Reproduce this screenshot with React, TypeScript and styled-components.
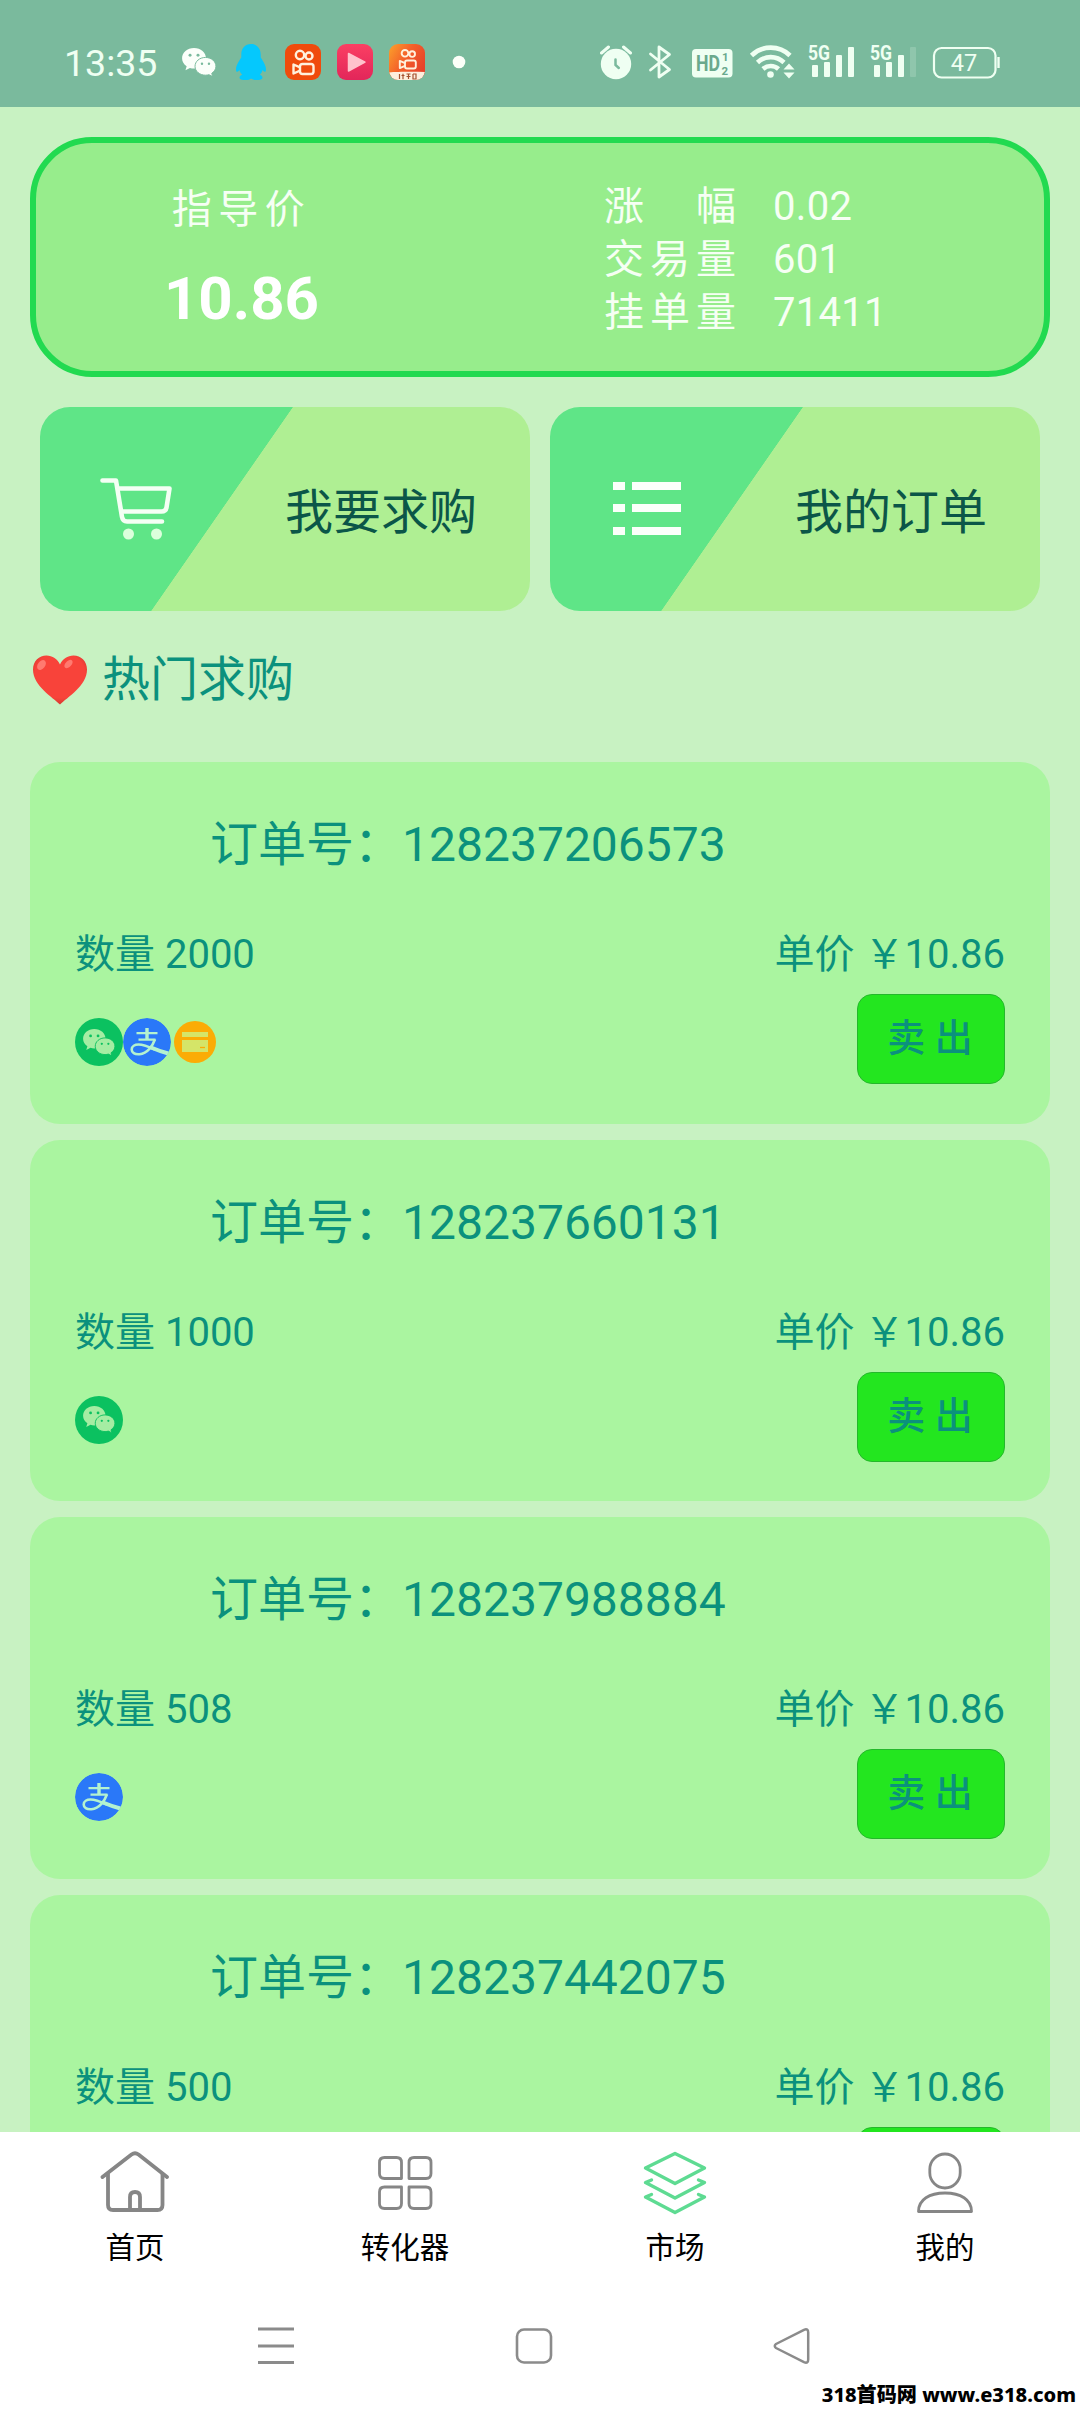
import React from "react";
import styled, { createGlobalStyle } from "styled-components";
import { AiFillAlipayCircle } from "react-icons/ai";

const GlobalStyle = createGlobalStyle`
  *, *::before, *::after { box-sizing: border-box; }
  body {
    margin: 0;
    background: #ffffff;
    font-family: Roboto, "Noto Sans CJK SC", sans-serif;
    -webkit-font-smoothing: antialiased;
  }
  svg { display: block; flex: none; }
`;

const Screen = styled.div`
  position: relative;
  display: flex;
  flex-direction: column;
  width: 1080px;
  height: 2412px;
  overflow: hidden;
  background: #ffffff;
`;

/* ---------- status bar ---------- */

const StatusBar = styled.header`
  display: flex;
  flex: none;
  align-items: center;
  justify-content: space-between;
  height: 107px;
  padding: 17px 79px 0 64px;
  background: #7aba9d;
  color: #effff2;
`;

const StatusLeft = styled.div`
  display: flex;
  align-items: center;
`;

const Clock = styled.time`
  width: 109px;
  padding-top: 2px;
  font-size: 37.5px;
  line-height: 44px;
  white-space: nowrap;
`;

const AppSlot = styled.span`
  display: flex;
  justify-content: center;
  width: 52px;
`;

const StatusRight = styled.div`
  display: flex;
  align-items: center;
  gap: 12px;
`;

/* ---------- content ---------- */

const Main = styled.main`
  flex: 1;
  min-height: 0;
  padding: 30px 30px 0;
  overflow: hidden;
  background: #c8f2c2;
`;

const PriceCard = styled.section`
  display: flex;
  height: 240px;
  border: 6px solid #22da50;
  border-radius: 62px;
  background: #97ed8c;
  color: #f6fff4;
  font-size: 40px;
`;

const GuidePrice = styled.div`
  display: flex;
  flex-direction: column;
  align-items: center;
  width: 411px;
  padding-top: 40px;
`;

const GuideLabel = styled.span`
  line-height: 53px;
  letter-spacing: 6.5px;
`;

const GuideValue = styled.strong`
  margin-top: 28px;
  color: #ffffff;
  font-size: 60px;
  font-weight: 700;
  line-height: 70px;
`;

const Stats = styled.dl`
  display: grid;
  grid-template-columns: 169px auto;
  grid-auto-rows: 53px;
  align-content: start;
  margin: 0;
  padding: 37px 0 0 157px;
  line-height: 53px;
`;

const StatName = styled.dt`
  letter-spacing: 6px;
  white-space: pre;
`;

const StatValue = styled.dd`
  margin: 0;
  letter-spacing: 0.3px;
`;

const Actions = styled.nav`
  display: grid;
  grid-template-columns: 1fr 1fr;
  gap: 20px;
  margin-top: 30px;
  padding: 0 10px;
`;

const ActionButton = styled.button`
  display: flex;
  align-items: center;
  justify-content: space-between;
  height: 204px;
  padding: 0 53px 3px 59px;
  border: 0;
  border-radius: 30px;
  background: linear-gradient(124.8deg, #5fe587 39.98%, #afef93 40.1%);
  color: #0b5648;
  font: inherit;
  font-size: 48px;
`;

const Heading = styled.h2`
  display: flex;
  align-items: center;
  gap: 15px;
  margin: 37px 0 50px 3px;
  color: #0b917d;
  font-size: 48px;
  font-weight: 400;
  line-height: 64px;
`;

const OrderList = styled.div`
  display: flex;
  flex-direction: column;
  gap: 16px;
`;

const OrderCard = styled.article`
  flex: none;
  height: 361.6px;
  padding: 51px 45px 0;
  border-radius: 30px;
  background: #aaf5a0;
  color: #0b917d;
`;

const OrderTitle = styled.h3`
  margin: 0 0 50px 135px;
  font-size: 48px;
  font-weight: 400;
  line-height: 64px;
  white-space: nowrap;
`;

const OrderRow = styled.div`
  display: flex;
  align-items: center;
  justify-content: space-between;
  font-size: 40px;
  line-height: 56px;
`;

const OrderActions = styled(OrderRow)`
  margin-top: 11px;
`;

const Payments = styled.div`
  display: flex;
  align-items: center;
  padding-top: 6px;
`;

const SellButton = styled.button`
  width: 148px;
  height: 90px;
  padding: 0 2px 2px 0;
  border: 1.5px solid #24b82b;
  border-radius: 15px;
  background: #23e61f;
  color: #0b917d;
  font: inherit;
  font-size: 38px;
  font-weight: 500;
`;

/* ---------- bottom ---------- */

const TabBar = styled.nav`
  display: grid;
  flex: none;
  grid-template-columns: repeat(4, 1fr);
  height: 150px;
  padding-top: 17px;
  background: #ffffff;
`;

const Tab = styled.a<{ $active?: boolean }>`
  display: flex;
  flex-direction: column;
  align-items: center;
  gap: 16px;
  color: #000000;
  font-size: 29.500px;
  line-height: 34px;

  svg { color: ${(p) => (p.$active ? "#5edb92" : "#868686")}; }
`;

const SystemNav = styled.footer`
  display: grid;
  flex: none;
  grid-template-columns: repeat(3, 258px);
  justify-items: center;
  height: 130px;
  padding: 43px 0 0 147px;
  background: #ffffff;
  color: #8b8b8b;
`;

const Watermark = styled.span`
  position: absolute;
  right: 4px;
  bottom: 3px;
  color: #000000;
  font-family: "Noto Sans", "Noto Sans CJK SC", sans-serif;
  font-size: 20.1px;
  font-weight: 800;
  line-height: 28px;
  white-space: nowrap;
`;

/* ---------- icons ---------- */

const ChatBubbles = ({ size, fill, eyes }: { size: number; fill: string; eyes: string }) => (
  <svg width={size} height={size * 0.82} viewBox="0 0 34 28">
    <path
      d="M12 0C5.200 0 0 4.700 0 10.300c0 3.400 1.800 6.200 4.600 8.100L3.400 22.400l4.500-2.300c1.300.400 2.700.600 4.100.600C18.800 20.700 24 16 24 10.300S18.800 0 12 0z"
      fill={fill}
    />
    <circle cx="8" cy="7.400" r="1.500" fill={eyes} />
    <circle cx="16" cy="7.400" r="1.500" fill={eyes} />
    <path
      d="M23.500 9.500c-6 0-10.500 4-10.500 8.900s4.500 8.900 10.500 8.900c1.200 0 2.400-.2 3.500-.5l3.700 1.900-.9-3.300c2.600-1.700 4.200-4.200 4.200-7 0-4.900-4.500-8.900-10.500-8.900z"
      fill={fill}
      stroke={eyes}
      strokeWidth="1"
    />
    <circle cx="20" cy="15.800" r="1.200" fill={eyes} />
    <circle cx="27" cy="15.800" r="1.200" fill={eyes} />
  </svg>
);

const PenguinIcon = () => (
  <svg width="30" height="36" viewBox="0 0 30 36">
    <path
      d="M15 0C9 0 5.300 4.500 5.300 10.500v3C3 17 0 21 0 25.500c0 3 1.500 3 3.500.5.500 2 1.400 3.500 2.700 4.800-1.700.7-2.700 1.700-2.700 2.900C3.500 35.200 6 36 9.500 36c2.400 0 4.400-.7 5.500-1.600 1.100.9 3.100 1.600 5.500 1.600 3.500 0 6-.8 6-2.300 0-1.200-1-2.200-2.700-2.900 1.300-1.300 2.200-2.800 2.700-4.800 2 2.500 3.500 2.500 3.500-.5 0-4.500-3-8.500-5.300-12v-3C24.700 4.500 21 0 15 0z"
      fill="#05c8fd"
    />
  </svg>
);

const CameraGlyph = () => (
  <g fill="none" stroke="#fff0dc" strokeWidth="2.400">
    <circle cx="15" cy="11" r="4.200" />
    <circle cx="24" cy="12" r="3.500" />
    <rect x="15" y="20" width="13.500" height="10" rx="2.500" />
    <path d="M15 23.300l-6.500-2.800v9l6.500-2.800" strokeLinejoin="round" />
  </g>
);

const VideoAppIcon = () => (
  <svg width="36" height="36" viewBox="0 0 36 36">
    <rect width="36" height="36" rx="9" fill="#f04b0c" />
    <CameraGlyph />
  </svg>
);

const PlayerAppIcon = () => (
  <svg width="36" height="36" viewBox="0 0 36 36">
    <defs>
      <linearGradient id="player" x1="0" y1="0" x2="0" y2="1">
        <stop offset="0" stopColor="#fb3f63" />
        <stop offset="1" stopColor="#e2265a" />
      </linearGradient>
    </defs>
    <rect width="36" height="36" rx="9" fill="url(#player)" />
    <path d="M11.500 9.500v17.500l16.500-8.800z" fill="#ffc3cc" stroke="#ffc3cc" strokeWidth="1.500" strokeLinejoin="round" />
  </svg>
);

const LiteVideoAppIcon = () => (
  <svg width="36" height="36" viewBox="0 0 36 36">
    <defs>
      <linearGradient id="lite" x1="0" y1="0" x2="1" y2="0.6">
        <stop offset="0" stopColor="#fba32b" />
        <stop offset="0.5" stopColor="#f4602a" />
        <stop offset="1" stopColor="#e6422a" />
      </linearGradient>
      <clipPath id="liteClip">
        <rect width="36" height="36" rx="9" />
      </clipPath>
    </defs>
    <g clipPath="url(#liteClip)">
      <rect width="36" height="36" fill="url(#lite)" />
      <g transform="translate(4 0.500) scale(0.8)">
        <CameraGlyph />
      </g>
      <path d="M0 28.500c8-.8 24-.8 36-.5l-3 8H4z" fill="#fdeedd" />
      <path d="M10.500 30v5M14 29.800v5.400M12.500 31.500h3M17.500 30h4M17.500 32.500h4M19.500 30v5M24 30v5h3v-5h-3" fill="none" stroke="#a5502f" strokeWidth="1.200" />
    </g>
  </svg>
);

const DotIcon = () => (
  <svg width="14" height="14" viewBox="0 0 14 14">
    <circle cx="7" cy="7" r="6.300" fill="#fcfff9" />
  </svg>
);

const AlarmIcon = () => (
  <svg width="33" height="44" viewBox="600 40 33 44">
    <circle cx="616" cy="64" r="15.200" fill="currentColor" />
    <path d="M601.500 53l7-6M630.500 53l-7-6" stroke="currentColor" strokeWidth="3" strokeLinecap="round" />
    <path d="M615.500 59.500v5.500l3.300 3" fill="none" stroke="#7aba9d" strokeWidth="2.500" strokeLinecap="round" />
  </svg>
);

const BluetoothIcon = () => (
  <svg width="34" height="44" viewBox="645 40 34 44">
    <path
      d="M650.500 54l19 15.500-10.500 7.500V47l10.500 7.500-19 15.500"
      fill="none"
      stroke="currentColor"
      strokeWidth="2.800"
      strokeLinejoin="round"
      strokeLinecap="round"
    />
  </svg>
);

const HdIcon = () => (
  <svg width="45" height="44" viewBox="691 40 45 44">
    <rect x="692" y="49" width="40.500" height="28.500" rx="4" fill="currentColor" />
    <g fill="#6aa98d" fontFamily="Roboto, sans-serif" fontWeight="700">
      <text x="696" y="71" fontSize="22.500" textLength="24" lengthAdjust="spacingAndGlyphs">HD</text>
      <text x="722" y="61" fontSize="11.500">1</text>
      <text x="721.500" y="74.500" fontSize="11.500">2</text>
    </g>
  </svg>
);

const WifiIcon = () => (
  <svg width="48" height="44" viewBox="748 40 48 44">
    <g fill="none" stroke="currentColor" strokeWidth="4.600">
      <path d="M751.500 55.500a27.500 27.500 0 0 1 38.500 0" />
      <path d="M757.500 62.500a19 19 0 0 1 26.500 0" />
      <path d="M763 69a11.500 11.500 0 0 1 15.500 0" />
    </g>
    <circle cx="770.500" cy="74.500" r="3.300" fill="currentColor" />
    <path d="M783.500 69.500h11l-5.500-6zM783.500 72.500h11l-5.500 6z" fill="currentColor" />
  </svg>
);

const SignalIcon = ({ width, bars }: { width: number; bars: number }) => (
  <svg width={width} height="44" viewBox={`808 40 ${width} 44`}>
    <text
      x="808"
      y="60"
      fontSize="20"
      fontWeight="700"
      fontFamily="Roboto, sans-serif"
      fill="currentColor"
      textLength="22"
      lengthAdjust="spacingAndGlyphs"
    >
      5G
    </text>
    {[65, 62, 55, 47].map((top, i) => (
      <rect
        key={top}
        x={812 + i * 12}
        y={top}
        width="6"
        height={77 - top}
        rx="1"
        fill="currentColor"
        opacity={i < bars ? 1 : 0.18}
      />
    ))}
  </svg>
);

const BatteryIcon = () => (
  <svg width="70" height="44" viewBox="931 40 70 44">
    <rect x="934" y="48" width="61.500" height="29.500" rx="7.500" fill="none" stroke="currentColor" strokeWidth="2.200" />
    <path d="M998.500 57v11" stroke="currentColor" strokeWidth="2.400" />
    <text x="964" y="71" fontSize="23.500" textAnchor="middle" fontFamily="Roboto, sans-serif" fill="currentColor">
      47
    </text>
  </svg>
);

const CartIcon = () => (
  <svg width="74" height="64" viewBox="99 475 74 64">
    <g fill="none" stroke="#f4fff4" strokeWidth="4.600" strokeLinecap="round" strokeLinejoin="round">
      <path d="M102.500 479.500h13.500l6 36.500q.8 4.500 5 4.500h35" />
      <path d="M119 487.500h50.500l-3 19q-.7 4-5 4h-39" />
    </g>
    <circle cx="128.500" cy="533" r="5.500" fill="#dcffdc" />
    <circle cx="156.500" cy="533" r="5.500" fill="#dcffdc" />
  </svg>
);

const ListIcon = () => (
  <svg width="76" height="56" viewBox="609 480 76 56">
    {[482, 504, 527].map((y) => (
      <g key={y} fill="#fbfffa">
        <rect x="613" y={y} width="12" height="8" />
        <rect x="632" y={y} width="49" height="8" />
      </g>
    ))}
  </svg>
);

const HeartIcon = () => (
  <svg width="54" height="50" viewBox="0 0 54 50">
    <defs>
      <radialGradient id="heart" cx="0.5" cy="0.4" r="0.62">
        <stop offset="0.75" stopColor="#f8433a" />
        <stop offset="1" stopColor="#d0392f" />
      </radialGradient>
    </defs>
    <path
      d="M27 49.500C20 42.500 0 31 0 14.500 0 6 6.200.5 13.500.5c6 0 11 3.500 13.500 9C29.500 4 34.500.5 40.500.5 47.800.5 54 6 54 14.500 54 31 34 42.500 27 49.500z"
      fill="url(#heart)"
    />
    <ellipse cx="8.500" cy="10" rx="3.600" ry="5.500" transform="rotate(38 8.500 10)" fill="#ff7a70" />
    <ellipse cx="35.500" cy="9" rx="3" ry="5" transform="rotate(45 35.500 9)" fill="#ff7a70" />
  </svg>
);

const PaymentDisc = styled.span<{ $color: string; $size: number }>`
  display: flex;
  align-items: center;
  justify-content: center;
  width: ${(p) => p.$size}px;
  height: ${(p) => p.$size}px;
  margin: 0 ${(p) => (48 - p.$size) / 2}px;
  border-radius: 50%;
  background: ${(p) => p.$color};
`;

const WechatPay = () => (
  <PaymentDisc $color="#0bc160" $size={48}>
    <ChatBubbles size={32} fill="#a5eda3" eyes="#0bc160" />
  </PaymentDisc>
);

/* The character's last stroke sweeps out through the right edge of the disc. */
const Alipay = () => (
  <svg width="48" height="48" viewBox="0 0 48 48">
    <defs>
      <clipPath id="alipayClip">
        <circle cx="24" cy="24" r="24" />
      </clipPath>
    </defs>
    <g clipPath="url(#alipayClip)">
      <circle cx="24" cy="24" r="24" fill="#2a78f8" />
      <g fill="none" stroke="#b4f2cf">
        <path d="M24 10v11.500" strokeWidth="3.400" />
        <path d="M13.500 15.200h21" strokeWidth="2.300" />
        <path d="M15.500 21.700h17" strokeWidth="2.300" />
        <path d="M32 21.200c-2.200 6.300-7.500 14.300-15.500 15-5 .4-7.800-1.700-7.800-4.700 0-3.300 3.200-5 6.800-5 5.500 0 11 2.500 16.500 5" strokeWidth="2.600" />
        <path d="M28 29.500c5 2.200 9.500 4 19 6.500" strokeWidth="4" />
      </g>
    </g>
  </svg>
);

const CardPay = () => (
  <PaymentDisc $color="#fbac06" $size={42}>
    <svg width="26" height="20" viewBox="0 0 26 20">
      <path d="M0 0h26v5H0zM0 8h26v12H0z" fill="#d5e568" />
      <path d="M18 15.500h5" stroke="#fbac06" strokeWidth="1.300" />
    </svg>
  </PaymentDisc>
);

const HomeIcon = () => (
  <svg width="70" height="66" viewBox="100 2149 70 66">
    <g fill="none" stroke="currentColor" strokeWidth="3.800" strokeLinecap="round" strokeLinejoin="round">
      <path d="M102.500 2177l29-22.500q3.500-2.500 7 0l28.500 22.500" />
      <path d="M108 2174v31q0 5 5 5h44.500q5 0 5-5v-31" />
      <path d="M130 2209v-12q0-5 5-5t5 5v12" />
    </g>
  </svg>
);

const GridIcon = () => (
  <svg width="56" height="66" viewBox="377 2149 56 66">
    <g fill="none" stroke="currentColor" strokeWidth="2.800" strokeLinejoin="round">
      <path d="M401.500 2178.500h-17q-5 0-5-5v-11q0-5 5-5h12q5 0 5 5z" />
      <path d="M409 2178.500h17q5 0 5-5v-11q0-5-5-5h-12q-5 0-5 5z" />
      <path d="M401.500 2187h-17q-5 0-5 5v11.500q0 5 5 5h12q5 0 5-5z" />
      <path d="M409 2187h17q5 0 5 5v11.500q0 5-5 5h-12q-5 0-5-5z" />
    </g>
  </svg>
);

const LayersIcon = () => (
  <svg width="66" height="66" viewBox="642 2149 66 66">
    <g fill="none" stroke="currentColor" strokeWidth="3.400" strokeLinejoin="round" strokeLinecap="round">
      <path d="M675 2153.500l29.500 14.500-29.500 15.500-29.500-15.500z" />
      <path d="M651.500 2180l-6 2.500 29.500 15.500 29.500-15.500-6-2.500" />
      <path d="M651.500 2194.500l-6 2.500 29.500 15.500 29.500-15.500-6-2.500" />
    </g>
  </svg>
);

const UserIcon = () => (
  <svg width="60" height="66" viewBox="915 2149 60 66">
    <g fill="none" stroke="currentColor" strokeWidth="2.800" strokeLinejoin="round">
      <rect x="929.800" y="2154" width="30.400" height="34" rx="15.200" />
      <path d="M918.500 2211.500c0-12 11-18.500 26.500-18.500s26.500 6.500 26.500 18.500z" />
    </g>
  </svg>
);

const MenuIcon = () => (
  <svg width="38" height="44" viewBox="0 0 38 44">
    <path d="M1 4h36M1 21h36M1 37.500h36" stroke="currentColor" strokeWidth="3" />
  </svg>
);

const HomeSquareIcon = () => (
  <svg width="38" height="44" viewBox="0 0 38 44">
    <rect x="2" y="4.500" width="34" height="33" rx="7" fill="none" stroke="currentColor" strokeWidth="2.600" />
  </svg>
);

const BackIcon = () => (
  <svg width="38" height="44" viewBox="0 0 38 44">
    <path
      d="M3 19L31 4.800q4.200-1.800 4.200 2.700v27q0 4.500-4.200 2.700L3 23q-2.500-2 0-4z"
      fill="none"
      stroke="currentColor"
      strokeWidth="2.500"
      strokeLinejoin="round"
    />
  </svg>
);

/* ---------- data ---------- */

type Payment = "wechat" | "alipay" | "card";

const paymentIcons: Record<Payment, React.ComponentType> = {
  wechat: WechatPay,
  alipay: Alipay,
  card: CardPay,
};

const orders: { id: string; amount: number; price: string; payments: Payment[] }[] = [
  { id: "128237206573", amount: 2000, price: "10.86", payments: ["wechat", "alipay", "card"] },
  { id: "128237660131", amount: 1000, price: "10.86", payments: ["wechat"] },
  { id: "128237988884", amount: 508, price: "10.86", payments: ["alipay"] },
  { id: "128237442075", amount: 500, price: "10.86", payments: [] },
];

const stats = [
  { name: "涨\u3000幅", value: "0.02" },
  { name: "交易量", value: "601" },
  { name: "挂单量", value: "71411" },
];

const tabs = [
  { label: "首页", Icon: HomeIcon },
  { label: "转化器", Icon: GridIcon },
  { label: "市场", Icon: LayersIcon, active: true },
  { label: "我的", Icon: UserIcon },
];

export default function App() {
  return (
    <Screen>
      <GlobalStyle />
      <StatusBar>
        <StatusLeft>
          <Clock>13:35</Clock>
          <AppSlot><ChatBubbles size={34} fill="#fbfffa" eyes="#7aba9d" /></AppSlot>
          <AppSlot><PenguinIcon /></AppSlot>
          <AppSlot><VideoAppIcon /></AppSlot>
          <AppSlot><PlayerAppIcon /></AppSlot>
          <AppSlot><LiteVideoAppIcon /></AppSlot>
          <AppSlot><DotIcon /></AppSlot>
        </StatusLeft>
        <StatusRight>
          <AlarmIcon />
          <BluetoothIcon />
          <HdIcon />
          <WifiIcon />
          <SignalIcon width={50} bars={4} />
          <SignalIcon width={49} bars={3} />
          <BatteryIcon />
        </StatusRight>
      </StatusBar>

      <Main>
        <PriceCard>
          <GuidePrice>
            <GuideLabel>指导价</GuideLabel>
            <GuideValue>10.86</GuideValue>
          </GuidePrice>
          <Stats>
            {stats.map((s) => (
              <React.Fragment key={s.name}>
                <StatName>{s.name}</StatName>
                <StatValue>{s.value}</StatValue>
              </React.Fragment>
            ))}
          </Stats>
        </PriceCard>

        <Actions>
          <ActionButton>
            <CartIcon />
            我要求购
          </ActionButton>
          <ActionButton>
            <ListIcon />
            我的订单
          </ActionButton>
        </Actions>

        <Heading>
          <HeartIcon />
          热门求购
        </Heading>

        <OrderList>
          {orders.map((o) => (
            <OrderCard key={o.id}>
              <OrderTitle>订单号：{o.id}</OrderTitle>
              <OrderRow>
                <span>数量 {o.amount}</span>
                <span>单价 ￥{o.price}</span>
              </OrderRow>
              <OrderActions>
                <Payments>
                  {o.payments.map((p) => {
                    const Icon = paymentIcons[p];
                    return <Icon key={p} />;
                  })}
                </Payments>
                <SellButton>卖 出</SellButton>
              </OrderActions>
            </OrderCard>
          ))}
        </OrderList>
      </Main>

      <TabBar>
        {tabs.map(({ label, Icon, active }) => (
          <Tab key={label} $active={active}>
            <Icon />
            {label}
          </Tab>
        ))}
      </TabBar>

      <SystemNav>
        <MenuIcon />
        <HomeSquareIcon />
        <BackIcon />
      </SystemNav>
      <Watermark>318首码网 www.e318.com</Watermark>
    </Screen>
  );
}
